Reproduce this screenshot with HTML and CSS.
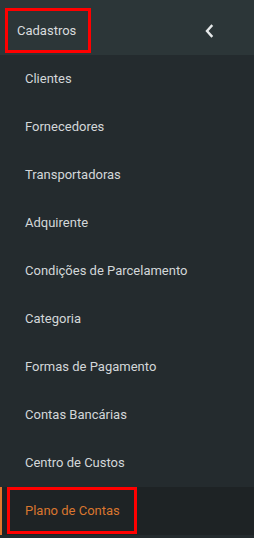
FILE: index.html
```html
<!DOCTYPE html>
<html lang="pt-BR">
<head>
    <meta charset="UTF-8">
    <meta name="viewport" content="width=device-width, initial-scale=1.0">
    <title>Cadastros</title>
    <link rel="stylesheet" href="styles.css">
</head>
<body>

<nav class="sidebar">
    <!-- Menu header -->
    <div class="menu-header">
        <span class="menu-title marked">Cadastros</span>
        <svg class="chevron" width="10" height="14" viewBox="0 0 10 14">
            <polyline points="7.5,2 3,7 7.5,12" fill="none" stroke="#e6e9ea" stroke-width="2.4" stroke-linecap="square"/>
        </svg>
    </div>

    <!-- Submenu -->
    <ul class="submenu">
        <li><a href="#">Clientes</a></li>
        <li><a href="#">Fornecedores</a></li>
        <li><a href="#">Transportadoras</a></li>
        <li><a href="#">Adquirente</a></li>
        <li><a href="#">Condições de Parcelamento</a></li>
        <li><a href="#">Categoria</a></li>
        <li><a href="#">Formas de Pagamento</a></li>
        <li><a href="#">Contas Bancárias</a></li>
        <li><a href="#">Centro de Custos</a></li>
        <li class="active"><a href="#" class="marked">Plano de Contas</a></li>
    </ul>
</nav>

</body>
</html>
```

FILE: styles.css
```css
/* Basic styling */
body {
    margin: 0;
    padding: 0;
    background-color: #242b2e;
    font-family: Roboto, "Liberation Sans", sans-serif;
    font-size: 13px;
}
.sidebar {
    width: 254px;
}
.menu-header {
    height: 55px;
    background-color: #2c3638;
    display: flex;
    align-items: center;
    justify-content: space-between;
    padding: 0 40px 0 5px;
}
.menu-title {
    height: 39px;
    width: 71px;
    padding-left: 9px;
    line-height: 39px;
    color: #d9dcde;
    margin-top: 6px;
}
.chevron {
    display: block;
    margin-top: 6px;
}
/* red annotation boxes */
.marked {
    border: 3px solid #ff0000;
    display: block;
}
.submenu {
    list-style: none;
    margin: 0;
    padding: 0;
}
.submenu li a {
    display: block;
    height: 48px;
    line-height: 48px;
    padding-left: 25px;
    color: #d3d7d9;
    text-decoration: none;
}
.submenu li.active {
    background-color: #1e2325;
    border-left: 2px solid #e0782f;
    height: 48px;
}
.submenu li.active a {
    color: #d9762f;
    margin-left: 5px;
    width: 109px;
    height: 41px;
    line-height: 41px;
    padding-left: 15px;
}
```
